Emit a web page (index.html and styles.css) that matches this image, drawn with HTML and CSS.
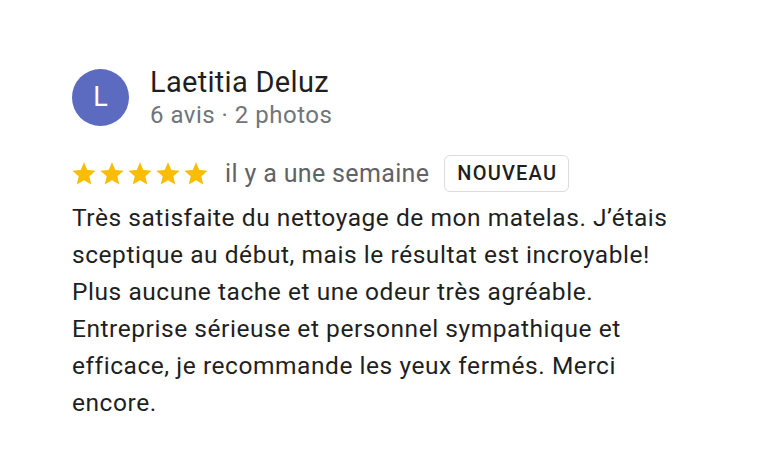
FILE: index.html
```html
<!DOCTYPE html>
<html lang="fr">
  <head>
    <meta charset="UTF-8" />
    <meta name="viewport" content="width=device-width, initial-scale=1.0" />
    <title>Avis</title>
    <link rel="stylesheet" href="styles.css">
  </head>
  <body>
    <div class="review">
      <div class="author">
        <div class="avatar">L</div>
        <div class="author-info">
          <div class="author-name">Laetitia Deluz</div>
          <div class="author-meta">6 avis · 2 photos</div>
        </div>
      </div>
      <div class="rating-row">
        <div class="stars">
          <svg class="star" viewBox="0 0 24 24"><path d="M12 17.27L18.18 21l-1.64-7.03L22 9.24l-7.19-.61L12 2 9.19 8.63 2 9.24l5.46 4.73L5.82 21z"/></svg>
          <svg class="star" viewBox="0 0 24 24"><path d="M12 17.27L18.18 21l-1.64-7.03L22 9.24l-7.19-.61L12 2 9.19 8.63 2 9.24l5.46 4.73L5.82 21z"/></svg>
          <svg class="star" viewBox="0 0 24 24"><path d="M12 17.27L18.18 21l-1.64-7.03L22 9.24l-7.19-.61L12 2 9.19 8.63 2 9.24l5.46 4.73L5.82 21z"/></svg>
          <svg class="star" viewBox="0 0 24 24"><path d="M12 17.27L18.18 21l-1.64-7.03L22 9.24l-7.19-.61L12 2 9.19 8.63 2 9.24l5.46 4.73L5.82 21z"/></svg>
          <svg class="star" viewBox="0 0 24 24"><path d="M12 17.27L18.18 21l-1.64-7.03L22 9.24l-7.19-.61L12 2 9.19 8.63 2 9.24l5.46 4.73L5.82 21z"/></svg>
        </div>
        <span class="date">il y a une semaine</span>
        <span class="badge">NOUVEAU</span>
      </div>
      <p class="review-text">Très satisfaite du nettoyage de mon matelas. J’étais sceptique au début, mais le résultat est incroyable! Plus aucune tache et une odeur très agréable. Entreprise sérieuse et personnel sympathique et efficace, je recommande les yeux fermés. Merci encore.</p>
    </div>
  </body>
</html>
```

FILE: styles.css
```css
body {
  margin: 0;
  font-family: Roboto, "Liberation Sans", Arial, sans-serif;
  background-color: #fff;
  color: #1f1f1f;
}
.review {
  padding: 63px 0 0 72px;
  width: 600px;
}
.author {
  display: flex;
  align-items: center;
  gap: 21px;
}
.avatar {
  width: 57px;
  height: 57px;
  border-radius: 50%;
  background-color: #5c6bc0;
  color: #fff;
  font-size: 27px;
  display: flex;
  align-items: center;
  justify-content: center;
}
.author-info {
  margin-top: 2px;
}
.author-name {
  font-size: 29px;
  line-height: 34px;
  letter-spacing: 0.3px;
  color: #1f1f1f;
}
.author-meta {
  font-size: 24px;
  line-height: 32px;
  letter-spacing: 0.5px;
  color: #70757a;
}
.rating-row {
  display: flex;
  align-items: center;
  margin-top: 24px;
}
.stars {
  display: flex;
  margin-left: -2px;
}
.star {
  width: 28px;
  height: 28px;
  fill: #fbbc04;
}
.date {
  font-size: 25px;
  letter-spacing: 0.35px;
  color: #5f6368;
  margin-left: 15px;
}
.badge {
  margin-left: 15px;
  padding: 0 11px 0 12px;
  height: 35px;
  line-height: 35px;
  border: 1px solid #dadce0;
  border-radius: 6px;
  font-size: 20px;
  font-weight: 500;
  letter-spacing: 1.2px;
  color: #1f1f1f;
}
.review-text {
  margin: 7px 0 0;
  font-size: 24.5px;
  line-height: 37px;
  letter-spacing: 0.55px;
  color: #1f1f1f;
}
```
